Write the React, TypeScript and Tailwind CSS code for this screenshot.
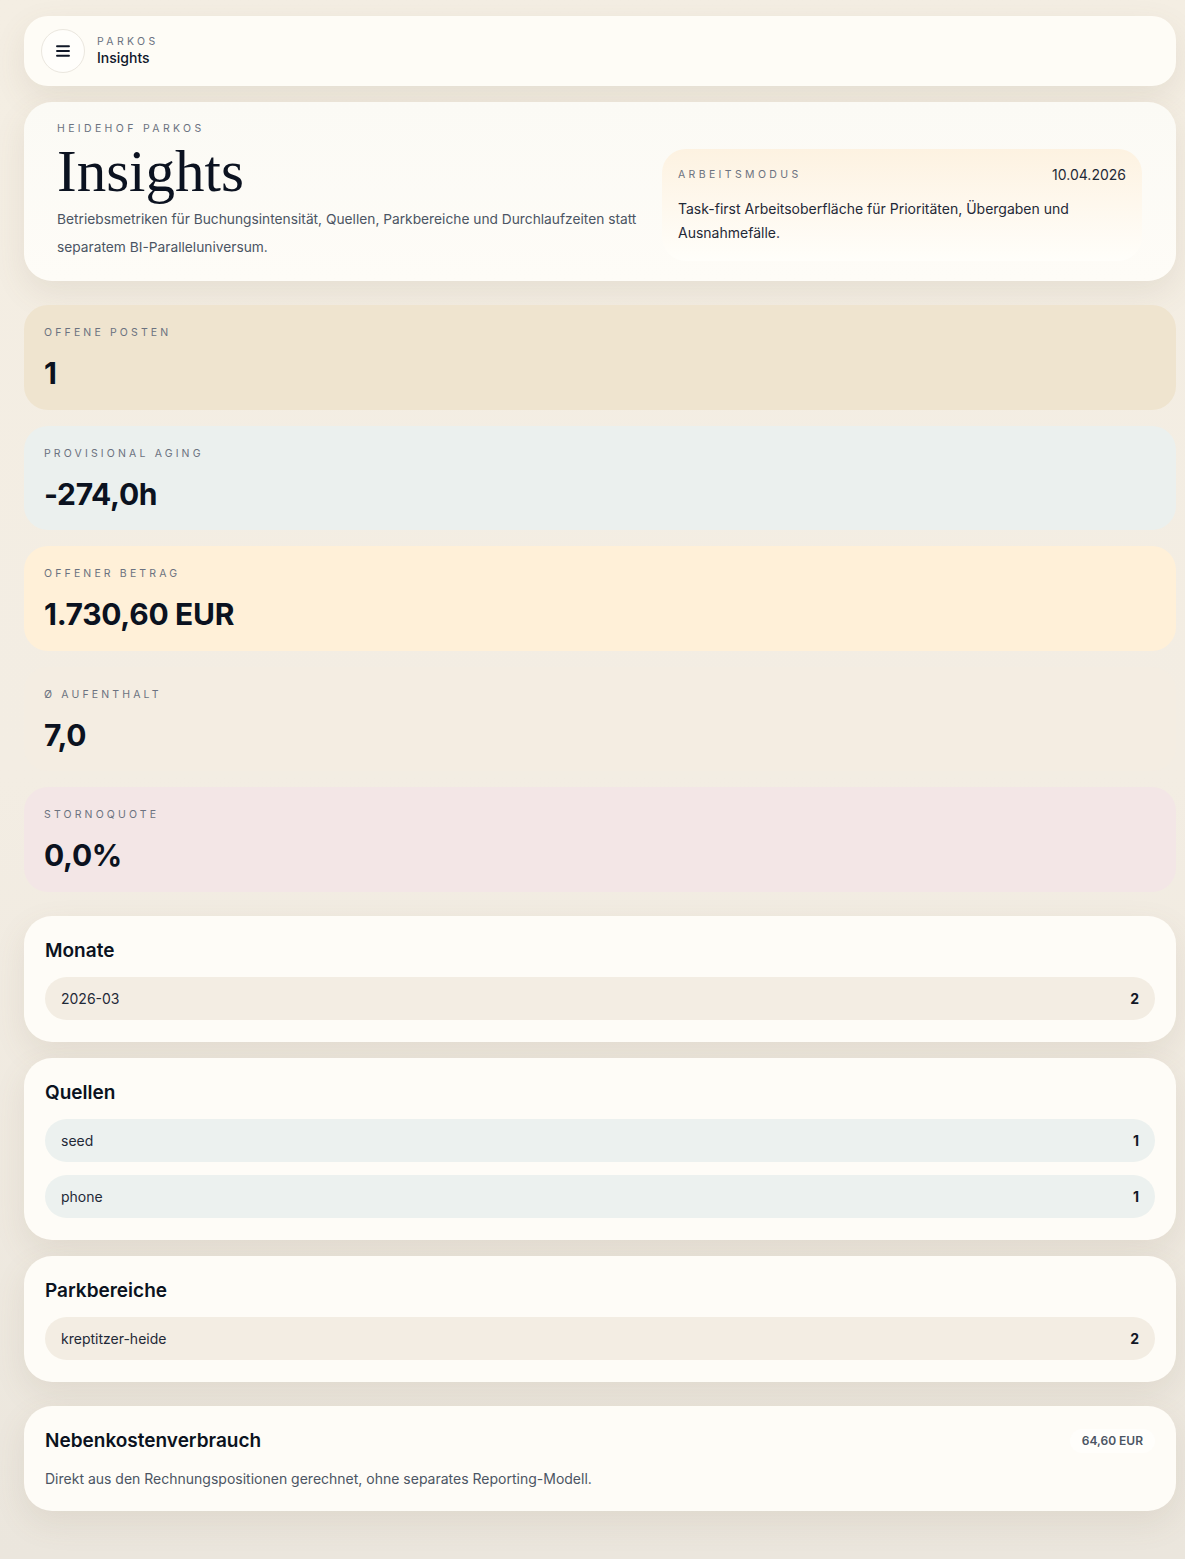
import React from 'react';

type Metric = { label: string; value: string; tone: string };

const metrics: Metric[] = [
  { label: 'Offene Posten', value: '1', tone: 'bg-[#efe4cf]' },
  { label: 'Provisional Aging', value: '-274,0h', tone: 'bg-[#ebf0ee]' },
  { label: 'Offener Betrag', value: '1.730,60 EUR', tone: 'bg-[#fff0d8]' },
  { label: 'Ø Aufenthalt', value: '7,0', tone: 'bg-[#f4ede2]' },
  { label: 'Stornoquote', value: '0,0%', tone: 'bg-[#f3e6e6]' },
];

type Row = { name: string; count: number };

const sans = "font-['Inter','Noto_Sans',sans-serif]";

const cardShadow = 'shadow-[0_12px_32px_rgba(120,100,70,0.11)]';

function MenuGlyph() {
  return (
    <svg width="14" height="14" viewBox="0 0 14 14" fill="none">
      <path d="M1 2.2h12M1 7h12M1 11.8h12" stroke="#111827" strokeWidth="1.9" strokeLinecap="round" />
    </svg>
  );
}

function TopBar() {
  return (
    <header className={`flex items-center gap-3 rounded-[24px] bg-[#fefcf6] px-[17px] py-[13px] ${cardShadow}`}>
      <div className="flex h-[44px] w-[44px] items-center justify-center rounded-full border border-[#ebe7df] bg-[#fffefb]">
        <MenuGlyph />
      </div>
      <div className="flex flex-col">
        <span className="text-[10.5px] leading-[14px] tracking-[0.32em] text-[#6b7280] uppercase">Parkos</span>
        <span className="text-[14px] leading-[18px] font-medium text-[#0f172a]">Insights</span>
      </div>
    </header>
  );
}

function Hero() {
  return (
    <section
      className={`flex items-end gap-4 rounded-[28px] bg-gradient-to-b from-[#fbfaf5] to-[#fefcf7] pt-[19px] pr-[34px] pb-[20px] pl-[33px] ${cardShadow}`}
    >
      <div className="flex-1">
        <div className="text-[10.5px] leading-[16px] tracking-[0.32em] text-[#6b7280] uppercase">Heidehof Parkos</div>
        <h1 className="mt-[5px] font-['Liberation_Serif','DejaVu_Serif',serif] text-[59px] leading-[58px] text-[#0b1220]">
          Insights
        </h1>
        <p className="mt-[5px] text-[13.75px] leading-[28px] text-[#4b5563]">
          Betriebsmetriken für Buchungsintensität, Quellen, Parkbereiche und Durchlaufzeiten statt separatem
          BI-Paralleluniversum.
        </p>
      </div>
      <div className="w-[480px] shrink-0 rounded-[24px] bg-gradient-to-b from-[#fdf2e1] to-[#fffefa] px-4 pt-[18px] pb-4">
        <div className="flex items-center justify-between">
          <span className="text-[10.5px] leading-[16px] tracking-[0.32em] text-[#6b7280] uppercase">Arbeitsmodus</span>
          <span className="text-[14px] leading-[16px] text-[#1f2937]">10.04.2026</span>
        </div>
        <p className="mt-[14px] text-[14px] leading-[24px] text-[#1f2937]">
          Task-first Arbeitsoberfläche für Prioritäten, Übergaben und Ausnahmefälle.
        </p>
      </div>
    </section>
  );
}

function MetricCard({ label, value, tone }: Metric) {
  return (
    <div className={`rounded-[24px] px-5 pt-5 pb-[18.5px] ${tone}`}>
      <div className="text-[10.5px] leading-[16px] tracking-[0.3em] text-[#6b7280] uppercase">{label}</div>
      <div className="mt-[14px] text-[30px] leading-[36px] font-bold tracking-[-0.01em] text-[#0b1220]">{value}</div>
    </div>
  );
}

function ListCard({ title, rows, tone }: { title: string; rows: Row[]; tone: string }) {
  return (
    <section className={`rounded-[28px] bg-[#fefcf7] px-[21px] pt-[21px] pb-[22px] ${cardShadow}`}>
      <h2 className="text-[19px] leading-[28px] font-semibold text-[#0b1220]">{title}</h2>
      <div className="mt-3 flex flex-col gap-[13px]">
        {rows.map((r) => (
          <div key={r.name} className={`flex items-center justify-between rounded-full px-4 py-3 ${tone}`}>
            <span className="text-[14px] leading-[19px] text-[#1f2937]">{r.name}</span>
            <span className="text-[14px] leading-[19px] font-bold text-[#111827]">{r.count}</span>
          </div>
        ))}
      </div>
    </section>
  );
}

export default function App() {
  return (
    <div
      className={`${sans} min-h-[1559px] bg-gradient-to-b from-[#f4eee3] via-[#f3ede3] to-[#ebe6dd] pt-4 pr-[9px] pb-12 pl-6 antialiased`}
    >
      <div className="flex flex-col gap-6">
        <div className="flex flex-col gap-4">
          <TopBar />
          <Hero />
        </div>

        <div className="flex flex-col gap-4">
          {metrics.map((m) => (
            <MetricCard key={m.label} {...m} />
          ))}
        </div>

        <div className="flex flex-col gap-4">
          <ListCard title="Monate" tone="bg-[#f3ede3]" rows={[{ name: '2026-03', count: 2 }]} />
          <ListCard
            title="Quellen"
            tone="bg-[#ecf1ef]"
            rows={[
              { name: 'seed', count: 1 },
              { name: 'phone', count: 1 },
            ]}
          />
          <ListCard title="Parkbereiche" tone="bg-[#f3ede3]" rows={[{ name: 'kreptitzer-heide', count: 2 }]} />
        </div>

        <section className={`rounded-[28px] bg-[#fefcf7] px-[21px] pt-[21px] pb-[22px] ${cardShadow}`}>
          <div className="flex items-center justify-between">
            <h2 className="text-[19px] leading-[28px] font-semibold text-[#0b1220]">Nebenkostenverbrauch</h2>
            <span className="rounded-full bg-[#fffefb] px-3 py-1 text-[12px] leading-[16px] font-semibold text-[#4b5563]">
              64,60 EUR
            </span>
          </div>
          <p className="mt-[14px] text-[14px] leading-[20px] text-[#4b5563]">
            Direkt aus den Rechnungspositionen gerechnet, ohne separates Reporting-Modell.
          </p>
        </section>
      </div>
    </div>
  );
}
